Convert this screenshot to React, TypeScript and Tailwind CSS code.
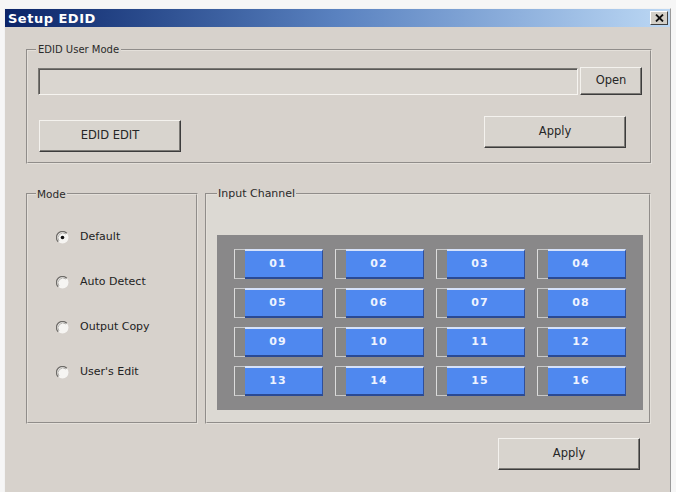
import React from "react";

const ui = "font-['DejaVu_Sans',sans-serif]";

function WinButton({ label, className }: { label: string; className: string }) {
  return (
    <div
      className={`flex items-center justify-center bg-[#d8d4ce] border border-t-[#f4f2ee] border-l-[#f4f2ee] border-r-[#3c3c3c] border-b-[#3c3c3c] shadow-[inset_-1px_-1px_0_#7c7a76] text-[11.5px] text-[#262626] ${ui} ${className}`}
    >
      {label}
    </div>
  );
}

function Radio({ label, checked }: { label: string; checked?: boolean }) {
  return (
    <div className="flex items-center h-[16px] gap-[11px]">
      <svg width="13" height="13" viewBox="0 0 13 13">
        <circle cx="6.5" cy="6.5" r="6" fill="#f6f5f2" />
        <path d="M2.2 10.8 A6 6 0 0 1 10.8 2.2" fill="none" stroke="#6e6c68" strokeWidth="1.3" />
        <path d="M3 10 A5 5 0 0 1 10 3" fill="none" stroke="#b4b2ae" strokeWidth="1" />
        {checked && <circle cx="6.5" cy="6.5" r="1.8" fill="#111" />}
      </svg>
      <span className={`text-[11px] text-[#222] ${ui}`}>{label}</span>
    </div>
  );
}

function Channel({ n }: { n: string }) {
  return (
    <div className="flex h-[30px] w-[89px]">
      <div className="w-[11px] h-full border-l border-t border-b border-l-[#dcdcdc] border-t-[#c8c8c8] border-b-[#c8c8c8] bg-[#868686]" />
      <div
        className={`flex-1 flex items-center justify-center pr-[11px] bg-[#4f88ef] border-t-2 border-t-[#d6e2fa] border-b-2 border-b-[#2b4a93] border-r border-r-[#2f4f9a] text-[11px] font-bold tracking-[1px] text-[#eef3ff] ${ui}`}
      >
        {n}
      </div>
    </div>
  );
}

export default function App() {
  const channels = Array.from({ length: 16 }, (_, i) => String(i + 1).padStart(2, "0"));
  return (
    <div className="w-[676px] h-[492px] bg-[#f6f6f6] pt-[8px] pl-[4px] overflow-hidden">
      <div className="w-[667px] h-[484px] bg-[#d7d2cc] border-l border-t border-r border-l-[#f2f2f2] border-t-[#f2f2f2] border-r-[#9a9a9a] flex flex-col">
        {/* title bar */}
        <div className="h-[18px] bg-gradient-to-r from-[#0c2468] via-[#5a82c0] to-[#bcd8f4] flex items-center justify-between pl-[3px] pr-[2px]">
          <span className={`text-white font-bold text-[13px] tracking-[0.5px] leading-none ${ui}`}>Setup EDID</span>
          <div className="w-[18px] h-[14px] bg-[#d4d0c8] border border-t-white border-l-white border-r-[#404040] border-b-[#404040] flex items-center justify-center">
            <svg width="9" height="8" viewBox="0 0 9 8">
              <path d="M1 0.5 L8 7.5 M8 0.5 L1 7.5" stroke="#111" strokeWidth="1.8" />
            </svg>
          </div>
        </div>

        {/* body */}
        <div className="flex flex-col pl-[21px]">
          {/* EDID User Mode */}
          <fieldset className="mt-[16px] w-[626px] h-[121px] border-2 [border-style:groove] border-[#e4e0da]">
            <legend className={`ml-[8px] px-[2px] text-[10px] leading-[14px] text-[#2a2a2a] ${ui}`}>EDID User Mode</legend>
            <div className="flex items-center mt-[10px] ml-[10px] gap-[2px]">
              <div className="w-[540px] h-[27px] bg-[#dad6d0] border border-t-[#7a7874] border-l-[#7a7874] border-r-[#f6f4f0] border-b-[#f6f4f0] shadow-[inset_1px_1px_0_#5a5856]" />
              <WinButton label="Open" className="w-[62px] h-[28px]" />
            </div>
            <div className="flex items-start justify-between mt-[21px] ml-[11px] mr-[24px]">
              <WinButton label="EDID EDIT" className="mt-[4px] w-[142px] h-[32px]" />
              <WinButton label="Apply" className="w-[142px] h-[32px]" />
            </div>
          </fieldset>

          {/* Mode + Input Channel */}
          <div className="flex mt-[23px] gap-[7px]">
            <fieldset className="w-[172px] h-[237px] border-2 [border-style:groove] border-[#e4e0da]">
              <legend className={`ml-[8px] px-[1px] text-[10.5px] leading-[14px] text-[#2a2a2a] ${ui}`}>Mode</legend>
              <div className="flex flex-col gap-[29px] mt-[28px] ml-[28px]">
                <Radio label="Default" checked />
                <Radio label="Auto Detect" />
                <Radio label="Output Copy" />
                <Radio label="User's Edit" />
              </div>
            </fieldset>

            <fieldset className="w-[446px] h-[237px] border-2 [border-style:groove] border-[#e4e0da] bg-[#dcd9d3]">
              <legend className={`ml-[10px] px-[1px] text-[11px] leading-[14px] text-[#2a2a2a] ${ui}`}>Input Channel</legend>
              <div className="mt-[34px] ml-[10px] w-[426px] h-[175px] bg-[#898889] pl-[17px] pt-[14px]">
                <div className="grid grid-cols-[repeat(4,89px)] gap-x-[12px] gap-y-[9px]">
                  {channels.map((c) => (
                    <Channel key={c} n={c} />
                  ))}
                </div>
              </div>
            </fieldset>
          </div>

          {/* bottom apply */}
          <div className="flex justify-end mt-[14px] mr-[30px]">
            <WinButton label="Apply" className="w-[142px] h-[32px]" />
          </div>
        </div>
      </div>
    </div>
  );
}
